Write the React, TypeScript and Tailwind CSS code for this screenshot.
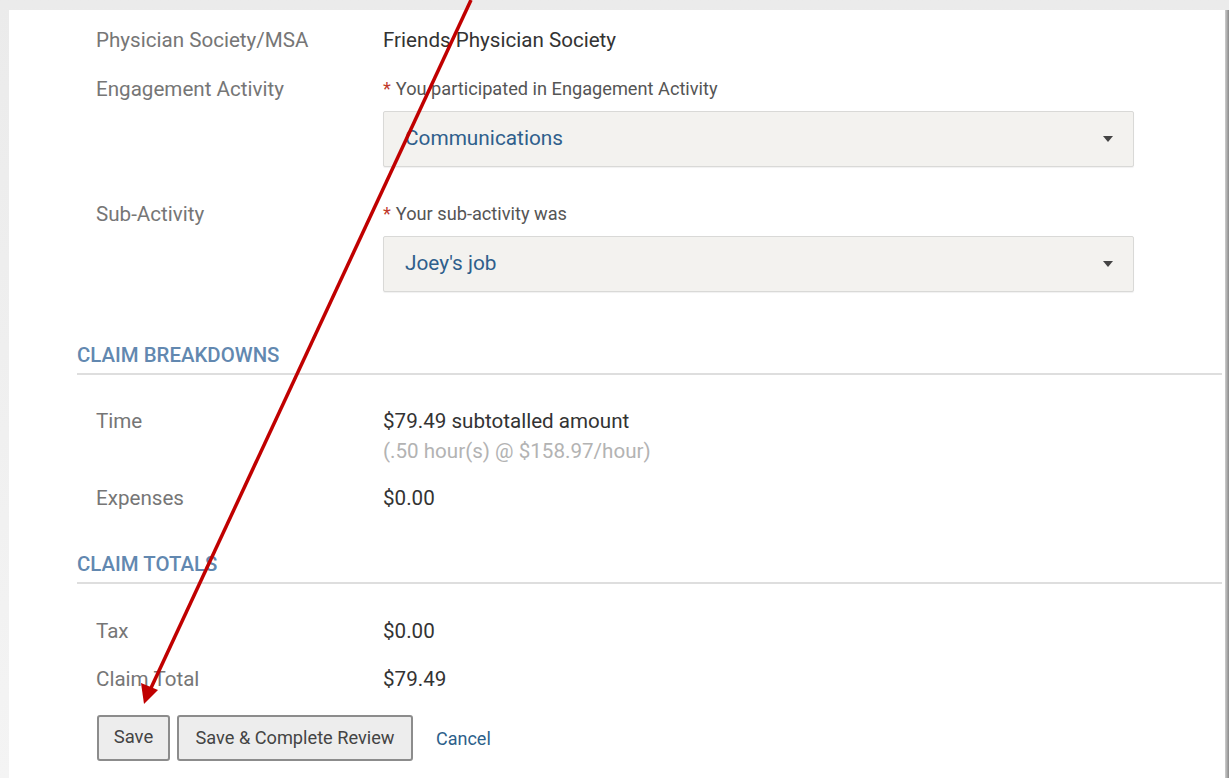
const font = { fontFamily: "Roboto, 'Liberation Sans', sans-serif" };

type RowProps = { label: string; children: React.ReactNode; className?: string };

function Row({ label, children, className = "" }: RowProps) {
  return (
    <div className={`flex pl-[19px] ${className}`}>
      <div className="w-[287px] shrink-0 text-[20.6px] leading-[24px] text-[#767676]">{label}</div>
      <div className="flex-1">{children}</div>
    </div>
  );
}

function SelectBox({ value, className = "" }: { value: string; className?: string }) {
  return (
    <div
      className={`flex h-[56px] w-[751px] items-center justify-between rounded-[2px] border border-[#d9d9d7] bg-[#f3f2ef] pl-[21px] pr-[20px] shadow-[0_1px_1px_rgba(0,0,0,0.06)] ${className}`}
    >
      <span className="text-[20.8px] text-[#2f5f8c]">{value}</span>
      <svg width="10" height="6" viewBox="0 0 10 6">
        <path d="M0 0h10L5 6z" fill="#444" />
      </svg>
    </div>
  );
}

function Required({ text }: { text: string }) {
  return (
    <div className="text-[18.2px] leading-[24px] text-[#555]">
      <span className="mr-[5px] text-[#c0392b]">*</span>
      {text}
    </div>
  );
}

function SectionHeader({ title, className = "" }: { title: string; className?: string }) {
  return (
    <div className={`border-b-2 border-[#dedede] pb-[6px] ${className}`}>
      <h3 className="text-[20.4px] font-medium leading-[24px] text-[#6288b0]">{title}</h3>
    </div>
  );
}

const value = "text-[20.6px] leading-[24px] text-[#333]";

export default function App() {
  return (
    <div style={font} className="relative h-[778px] w-[1229px] overflow-hidden bg-gradient-to-b from-[#ebebeb] to-[#f4f4f4]">
      <div className="flex h-full pl-[9px] pt-[10px]">
        <div className="h-full flex-1 bg-white pl-[68px] pr-[3px] pt-[18px]">
          <Row label="Physician Society/MSA">
            <div className={value}>Friends Physician Society</div>
          </Row>

          <Row label="Engagement Activity" className="mt-[25px]">
            <Required text="You participated in Engagement Activity" />
            <SelectBox value="Communications" className="mt-[10px]" />
          </Row>

          <Row label="Sub-Activity" className="mt-[35px]">
            <Required text="Your sub-activity was" />
            <SelectBox value="Joey's job" className="mt-[10px]" />
          </Row>

          <SectionHeader title="CLAIM BREAKDOWNS" className="mt-[51px]" />

          <Row label="Time" className="mt-[34px]">
            <div className={value}>$79.49 subtotalled amount</div>
            <div className="mt-[6px] text-[20.6px] leading-[24px] text-[#b3b3b3]">(.50 hour(s) @ $158.97/hour)</div>
          </Row>

          <Row label="Expenses" className="mt-[23px]">
            <div className={value}>$0.00</div>
          </Row>

          <SectionHeader title="CLAIM TOTALS" className="mt-[42px]" />

          <Row label="Tax" className="mt-[35px]">
            <div className={value}>$0.00</div>
          </Row>

          <Row label="Claim Total" className="mt-[24px]">
            <div className={value}>$79.49</div>
          </Row>

          <div className="mt-[24px] flex items-center pl-[20px]">
            <button className="h-[46px] w-[73px] rounded-[3px] border-2 border-[#8c8c8c] bg-[#ededed] text-[18.5px] text-[#444]">
              Save
            </button>
            <button className="ml-[7px] h-[46px] w-[236px] rounded-[3px] border-2 border-[#8c8c8c] bg-[#ededed] text-[18.2px] text-[#444]">
              Save &amp; Complete Review
            </button>
            <a className="ml-[23px] text-[18px] text-[#2d5f8a]">Cancel</a>
          </div>
        </div>
        <div className="h-full w-[4px] bg-gradient-to-r from-[#cfcfcf] to-[#8a8a8a]" />
      </div>

      {/* annotation arrow drawn over the form */}
      <svg className="pointer-events-none absolute inset-0" width="1229" height="778" viewBox="0 0 1229 778">
        <line x1="471" y1="0" x2="151" y2="688" stroke="#c00000" strokeWidth="3.5" />
        <path d="M144 704 L141 683 L158 690 Z" fill="#c00000" />
      </svg>
    </div>
  );
}
